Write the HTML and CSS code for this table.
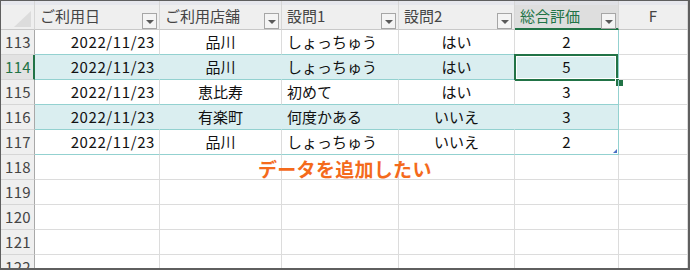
FILE: index.html
```html
<!DOCTYPE html>
<html lang="ja">
<head>
    <meta charset="UTF-8">
    <meta name="viewport" content="width=device-width, initial-scale=1.0">
    <title>店舗アンケート</title>
    <link rel="stylesheet" href="styles.css">
</head>
<body>
    <div class="sheet">
        <div class="grid">
            <!-- column headers -->
            <div class="corner"></div>
            <div class="col-head">ご利用日<span class="filter"></span></div>
            <div class="col-head">ご利用店舗<span class="filter"></span></div>
            <div class="col-head">設問1<span class="filter"></span></div>
            <div class="col-head">設問2<span class="filter"></span></div>
            <div class="col-head picked">総合評価<span class="filter"></span></div>
            <div class="col-head letter">F</div>

            <!-- table rows -->
            <div class="row-head">113</div>
            <div class="cell tb right date">2022/11/23</div>
            <div class="cell tb center">品川</div>
            <div class="cell tb">しょっちゅう</div>
            <div class="cell tb center">はい</div>
            <div class="cell tb center last">2</div>
            <div class="cell"></div>

            <div class="row-head picked">114</div>
            <div class="cell tb band right date">2022/11/23</div>
            <div class="cell tb band center">品川</div>
            <div class="cell tb band">しょっちゅう</div>
            <div class="cell tb band center">はい</div>
            <div class="cell tb band center last active">5</div>
            <div class="cell"></div>

            <div class="row-head">115</div>
            <div class="cell tb right date">2022/11/23</div>
            <div class="cell tb center">恵比寿</div>
            <div class="cell tb">初めて</div>
            <div class="cell tb center">はい</div>
            <div class="cell tb center last">3</div>
            <div class="cell"></div>

            <div class="row-head">116</div>
            <div class="cell tb band right date">2022/11/23</div>
            <div class="cell tb band center">有楽町</div>
            <div class="cell tb band">何度かある</div>
            <div class="cell tb band center">いいえ</div>
            <div class="cell tb band center last">3</div>
            <div class="cell"></div>

            <div class="row-head">117</div>
            <div class="cell tb right date">2022/11/23</div>
            <div class="cell tb center">品川</div>
            <div class="cell tb">しょっちゅう</div>
            <div class="cell tb center">いいえ</div>
            <div class="cell tb center last end">2</div>
            <div class="cell"></div>

            <!-- empty rows -->
            <div class="row-head">118</div>
            <div class="cell"></div><div class="cell"></div><div class="cell"></div><div class="cell"></div><div class="cell"></div><div class="cell"></div>
            <div class="row-head">119</div>
            <div class="cell"></div><div class="cell"></div><div class="cell"></div><div class="cell"></div><div class="cell"></div><div class="cell"></div>
            <div class="row-head">120</div>
            <div class="cell"></div><div class="cell"></div><div class="cell"></div><div class="cell"></div><div class="cell"></div><div class="cell"></div>
            <div class="row-head">121</div>
            <div class="cell"></div><div class="cell"></div><div class="cell"></div><div class="cell"></div><div class="cell"></div><div class="cell"></div>
            <div class="row-head">122</div>
            <div class="cell"></div><div class="cell"></div><div class="cell"></div><div class="cell"></div><div class="cell"></div><div class="cell"></div>
        </div>
        <div class="note">データを追加したい</div>
    </div>
</body>
</html>
```

FILE: styles.css
```css
*{
    box-sizing: border-box;
}
body{
    margin: 0;
    background-color: white;
    font-family: "Noto Sans CJK JP", "Noto Sans", sans-serif;
}
.sheet{
    position: relative;
    width: 690px;
    height: 270px;
    border-top: 1px solid #5f5f5f;
    border-left: 1px solid #5f5f5f;
    border-right: 2px solid #5f5f5f;
    border-bottom: 2px solid #5f5f5f;
    overflow: hidden;
}
.grid{
    display: grid;
    grid-template-columns: 34px 125px 122px 117px 116px 104px 1fr;
    grid-template-rows: 29px;
    grid-auto-rows: 25px;
    font-size: 15px;
    color: #111;
}

/* headers */
.corner, .col-head{
    position: relative;
    background: linear-gradient(#e6e7ed 0 4px, #efefef 4px);
    border-right: 1px solid #d6d6d6;
    border-bottom: 1px solid #c8c8c8;
}
.corner::after{
    content: "";
    position: absolute;
    right: 3px;
    bottom: 2px;
    border-left: 17px solid transparent;
    border-bottom: 16px solid #dcdcdc;
}
.col-head{
    padding: 4px 0 0 5px;
    line-height: 22px;
    color: #444;
    white-space: nowrap;
}
.col-head.letter{
    padding-left: 0;
    text-align: center;
}
.col-head.picked{
    background: linear-gradient(#e0e1e6 0 4px, #dedede 4px);
    color: #217346;
    border-bottom: 2px solid #217346;
}
.filter{
    position: absolute;
    right: 2px;
    top: 12px;
    width: 15px;
    height: 16px;
    border: 1px solid #a6a6a6;
    background-color: #f4f4f4;
}
.filter::after{
    content: "";
    position: absolute;
    left: 3px;
    top: 6px;
    border-left: 4px solid transparent;
    border-right: 4px solid transparent;
    border-top: 4px solid #595959;
}
.row-head{
    background-color: #efefef;
    border-right: 1px solid #a8a8a8;
    border-bottom: 1px solid #d6d6d6;
    padding-left: 4px;
    line-height: 24px;
    color: #444;
    letter-spacing: 0.3px;
}
.row-head.picked{
    background-color: #e2e2e2;
    color: #217346;
    border-right: 2px solid #217346;
}

/* cells */
.cell{
    position: relative;
    border-right: 1px solid #dcdcdc;
    border-bottom: 1px solid #dcdcdc;
    line-height: 24px;
    padding: 0 5px;
    white-space: nowrap;
}
.tb{
    border-bottom-color: #93d1d0;
}
.band{
    background-color: #daeef0;
    border-right-color: #daeef0;
}
.last{
    border-right-color: #93d1d0;
}
.right{
    text-align: right;
}
.center{
    text-align: center;
}
.date{
    letter-spacing: 0.6px;
    padding-right: 4px;
}
.active::before{
    content: "";
    position: absolute;
    top: -1px;
    left: -1px;
    right: 0;
    bottom: -2px;
    border: 2px solid #217346;
    box-shadow: inset 0 0 0 1px white;
}
.active::after{
    content: "";
    position: absolute;
    left: 100px;
    top: 23px;
    width: 7px;
    height: 7px;
    background-color: #217346;
    border: 1px solid white;
}
.end::after{
    content: "";
    position: absolute;
    right: 1px;
    bottom: 1px;
    border-left: 4px solid transparent;
    border-bottom: 4px solid #4a6fc4;
}

.note{
    position: absolute;
    left: 257px;
    top: 155px;
    line-height: 25px;
    font-size: 19px;
    font-weight: bold;
    color: #f46a1c;
    letter-spacing: 0.3px;
}
```
